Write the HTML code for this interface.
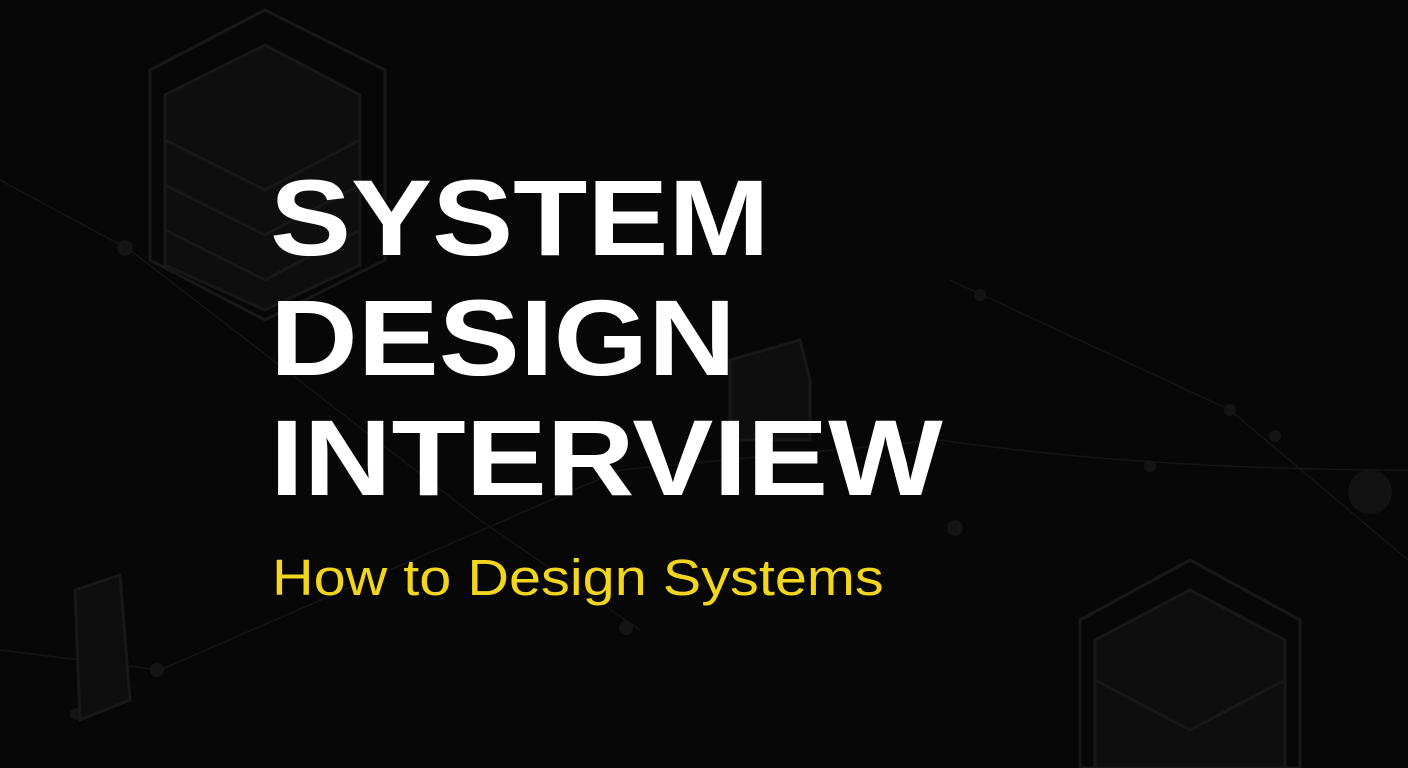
<!DOCTYPE html>
<html><head><meta charset="utf-8"><style>
html,body{margin:0;padding:0;width:1408px;height:768px;overflow:hidden;background:#070707;}
.bg{position:absolute;left:0;top:0;}
.t{position:absolute;left:270px;font-family:"Liberation Sans",sans-serif;font-weight:bold;color:#fff;font-size:108px;line-height:1;transform-origin:0 0;transform:scaleX(1.125);white-space:nowrap;}
.s{position:absolute;left:272px;top:552px;font-family:"Liberation Sans",sans-serif;color:#f2d51e;font-size:51px;line-height:1;transform-origin:0 0;transform:scaleX(1.13);white-space:nowrap;}
</style></head><body>
<svg class="bg" width="1408" height="768" viewBox="0 0 1408 768">
<rect width="1408" height="768" fill="#070707"/>
<g stroke="#151515" stroke-width="1.5" fill="none">
<path d="M0 180 L130 250 L480 520 L640 630"/>
<path d="M950 280 L1230 410 L1408 560"/>
<path d="M940 440 Q1150 470 1408 470"/>
<path d="M0 650 L160 670 L620 470 L940 440"/>
</g>
<g fill="#141414">
<circle cx="125" cy="248" r="8"/><circle cx="980" cy="295" r="6"/><circle cx="1230" cy="410" r="6"/><circle cx="1275" cy="436" r="6"/><circle cx="1150" cy="466" r="6"/><circle cx="955" cy="528" r="8"/><circle cx="626" cy="628" r="7"/><circle cx="157" cy="670" r="7"/><circle cx="76" cy="714" r="6"/>
</g>
<g stroke="#181818" stroke-width="3" fill="#0e0e0e">
<path d="M150 70 L265 10 L385 70 L385 260 L265 320 L150 260 Z" fill="none"/>
<path d="M165 95 L265 45 L360 95 L360 265 L265 310 L165 265 Z"/>
<path d="M165 140 L265 190 L360 140 M165 185 L265 235 L360 185 M165 230 L265 280 L360 230"/>
<path d="M1080 620 L1190 560 L1300 620 L1300 768 L1080 768 Z" fill="none"/>
<path d="M1095 640 L1190 590 L1285 640 L1285 768 L1095 768 Z"/>
<path d="M1095 680 L1190 730 L1285 680"/>
<path d="M730 360 L800 340 L810 380 L810 440 L730 440 Z"/>
<path d="M75 590 L120 575 L130 700 L80 720 Z"/>
</g>
<circle cx="1370" cy="492" r="22" fill="#121212"/>
</svg>
<div class="t" style="top:164px">SYSTEM</div>
<div class="t" style="top:284px">DESIGN</div>
<div class="t" style="top:404px">INTERVIEW</div>
<div class="s">How to Design Systems</div>
</body></html>
